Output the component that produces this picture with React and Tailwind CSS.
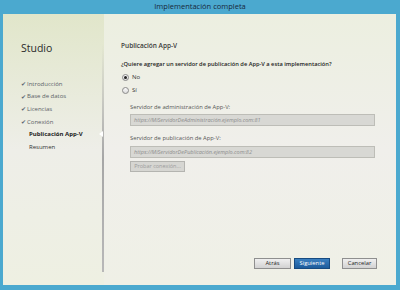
import React from "react";

const font = { fontFamily: '"Open Sans", "Noto Sans", sans-serif' };

function Nav({ done, active, children }) {
  return (
    <div className="flex items-center h-[12.6px]">
      {done ? (
        <>
          <span className="w-[6px] text-[5.5px] text-[#5b6470]">✔</span>
          <span className="text-[6px] text-[#5a5f66]">{children}</span>
        </>
      ) : (
        <span className={`pl-[8px] text-[6px] ${active ? "font-bold text-[#1c1c1c]" : "text-[#333]"}`}>{children}</span>
      )}
    </div>
  );
}

function Radio({ checked, label }) {
  return (
    <div className="flex items-center gap-[3px] h-[10px]">
      <span className="w-[7px] h-[7px] rounded-full border border-[#8a8a8a] bg-gradient-to-b from-[#fafafa] to-[#dcdcdc] flex items-center justify-center">
        {checked && <span className="w-[3px] h-[3px] rounded-full bg-[#222]" />}
      </span>
      <span className="text-[6px] text-[#333]">{label}</span>
    </div>
  );
}

export default function App() {
  return (
    <div className="w-[400px] h-[290px] bg-[#4ba9cf] flex flex-col" style={font}>
      <div className="h-[14px] flex items-center justify-center text-[7.5px] text-[#18283a]">
        Implementación completa
      </div>
      <div className="flex-1 ml-[3px] mr-[4px] mb-[5px] flex bg-gradient-to-b from-[#e1e6ca] via-[#eeeee8] to-[#eef0e2]">
        {/* Sidebar */}
        <div className="w-[99px] pl-[18px] pt-[26px] flex flex-col">
          <div className="text-[10.5px] leading-[16px] text-[#2a2a2a]">Studio</div>
          <div className="mt-[22px] flex flex-col">
            <Nav done>Introducción</Nav>
            <Nav done>Base de datos</Nav>
            <Nav done>Licencias</Nav>
            <Nav done>Conexión</Nav>
            <Nav active>Publicación App-V</Nav>
            <Nav>Resumen</Nav>
          </div>
        </div>
        {/* Divider */}
        <div className="relative w-[2px] mt-[30px] mb-[13px] bg-gradient-to-b from-transparent via-[#a6a6a6] to-[#b8b8b8]">
          <div className="absolute left-[-3px] top-[87px] w-0 h-0 border-y-[3px] border-y-transparent border-r-[4px] border-r-white" />
        </div>
        {/* Content */}
        <div className="flex-1 flex flex-col bg-gradient-to-b from-[#ecefe0] via-[#f0efeb] to-[#eff0e6] pl-[17px] pr-[19px]">
          <div className="pt-[27px] text-[6.5px] leading-[10px] font-semibold text-[#3a3a3a]">Publicación App-V</div>
          <div className="mt-[8px] text-[5.7px] leading-[10px] font-semibold text-[#222]">
            ¿Quiere agregar un servidor de publicación de App-V a esta implementación?
          </div>
          <div className="mt-[3px] pl-[1px]"><Radio checked label="No" /></div>
          <div className="mt-[3px] pl-[1px]"><Radio label="Sí" /></div>
          <div className="pl-[9px] pr-[2px] flex flex-col">
            <div className="mt-[7px] text-[5.8px] leading-[10px] text-[#555]">Servidor de administración de App-V:</div>
            <div className="mt-[2px] h-[12px] border border-[#bdbdb7] bg-[#d8d8d4] flex items-center pl-[3px] text-[5.5px] italic text-[#8d8d8d]">
              https://MiServidorDeAdministración.ejemplo.com:81
            </div>
            <div className="mt-[7px] text-[5.8px] leading-[10px] text-[#555]">Servidor de publicación de App-V:</div>
            <div className="mt-[3px] h-[12px] border border-[#bdbdb7] bg-[#d8d8d4] flex items-center pl-[3px] text-[5.5px] italic text-[#8d8d8d]">
              https://MiServidorDePublicación.ejemplo.com:82
            </div>
            <div className="mt-[3px] w-[55px] h-[11px] border border-[#b4b4b0] bg-[#d6d6d2] flex items-center justify-center text-[5.5px] text-[#9c9c9c]">
              Probar conexión...
            </div>
          </div>
          <div className="flex-1" />
          <div className="flex justify-end items-center pb-[16px]">
            <div className="w-[37px] h-[11px] border border-[#8f8f8f] bg-gradient-to-b from-[#f0f0f0] to-[#d2d2d2] flex items-center justify-center text-[5.8px] text-[#222]">Atrás</div>
            <div className="ml-[3px] w-[36px] h-[11px] border border-[#174a80] bg-gradient-to-b from-[#3a7fc0] to-[#1d5c9c] flex items-center justify-center text-[5.8px] text-white">Siguiente</div>
            <div className="ml-[12px] w-[35px] h-[11px] border border-[#8f8f8f] bg-gradient-to-b from-[#f0f0f0] to-[#d2d2d2] flex items-center justify-center text-[5.8px] text-[#222]">Cancelar</div>
          </div>
        </div>
      </div>
    </div>
  );
}
